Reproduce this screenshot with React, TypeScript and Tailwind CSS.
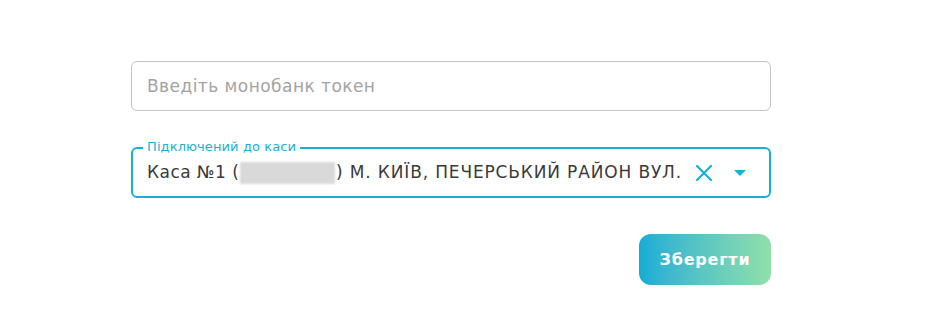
import { useState } from 'react';

export default function App() {
  const [token, setToken] = useState('');

  return (
    <div className="min-h-[330px] bg-white pl-[131px] pt-[61px]">
      <div className="w-[640px] flex flex-col font-['DejaVu_Sans',sans-serif]">
        <input
          value={token}
          onChange={(e) => setToken(e.target.value)}
          placeholder="Введіть монобанк токен"
          className="h-[50px] w-full rounded-[6px] border border-[#c4c4c4] px-[15px] text-[17px] tracking-[0.45px] text-[#333] placeholder:text-[#a3a3a3] outline-none"
        />

        <div className="relative mt-[36px] h-[51px] w-full rounded-[6px] border-2 border-[#17b0d6] flex items-center pl-[14px] pr-[17px]">
          <span className="absolute -top-[10px] left-[10px] bg-white px-[4px] text-[13px] leading-[16px] tracking-[0.1px] text-[#17b0d6]">
            Підключений до каси
          </span>
          <div className="flex-1 flex items-center text-[17px] tracking-[0.45px] text-[#3a3a3a] whitespace-nowrap overflow-hidden">
            <span>Каса №1 (</span>
            <span className="mx-[1px] h-[22px] w-[96px] bg-[#d9d9d9] blur-[1px]" />
            <span className="tracking-[0.85px]">) М. КИЇВ, ПЕЧЕРСЬКИЙ РАЙОН ВУЛ.</span>
          </div>
          <button className="ml-[10px] flex h-[24px] w-[24px] items-center justify-center">
            <svg width="20" height="20" viewBox="0 0 20 20" fill="none" stroke="#17b0d6" strokeWidth="2.2" strokeLinecap="round">
              <path d="M3 3 L17 17 M17 3 L3 17" />
            </svg>
          </button>
          <button className="ml-[12px] flex h-[24px] w-[24px] items-center justify-center">
            <svg width="12" height="6" viewBox="0 0 12 6">
              <path d="M0 0 L12 0 L6 6 Z" fill="#17b0d6" />
            </svg>
          </button>
        </div>

        <div className="mt-[36px] flex justify-end">
          <button className="h-[51px] w-[132px] rounded-[12px] bg-gradient-to-r from-[#12acd6] to-[#8fe0a8] text-[16px] font-bold text-white tracking-[0.8px]">
            Зберегти
          </button>
        </div>
      </div>
    </div>
  );
}
